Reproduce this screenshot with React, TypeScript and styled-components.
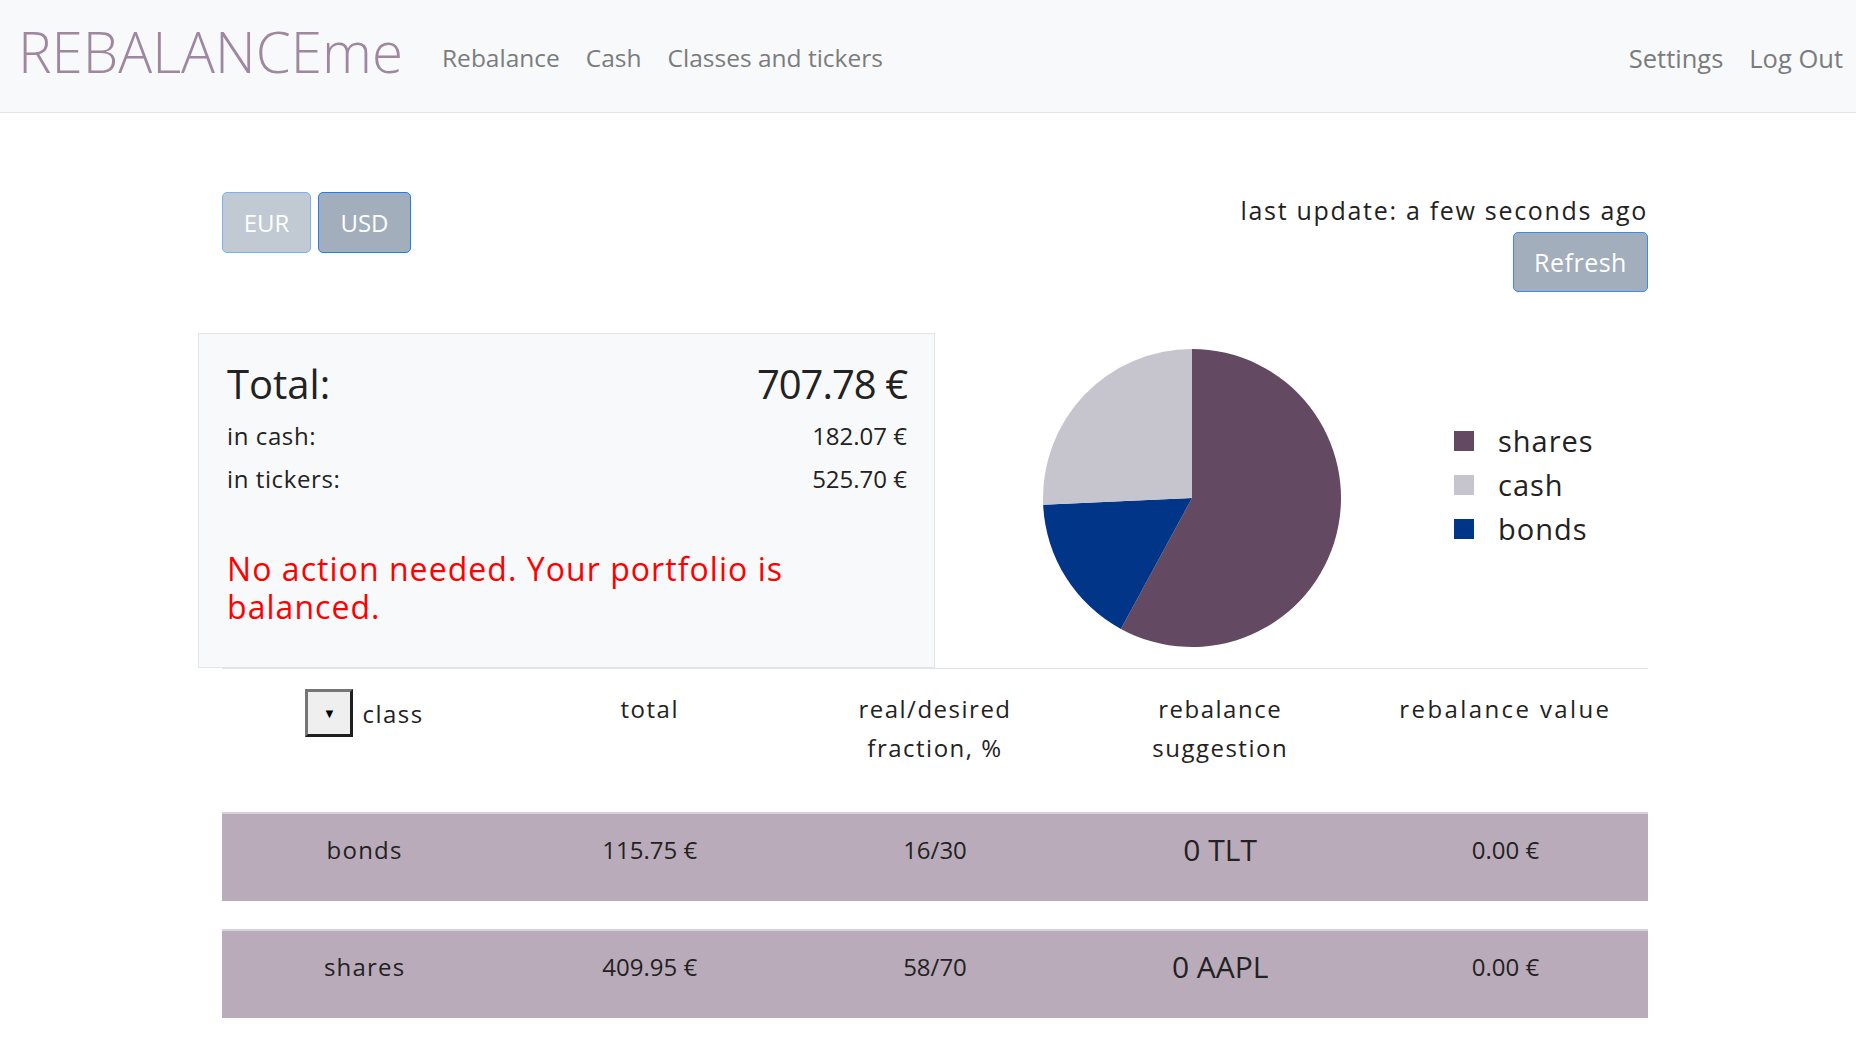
import styled, { createGlobalStyle } from "styled-components";

/**
 * 글로벌 스타일
 */
const GlobalStyle = createGlobalStyle`
  body {
    margin: 0;
    background: #ffffff;
    font-family: "Open Sans", "Lato", sans-serif;
    color: #212529;
  }
  * {
    box-sizing: border-box;
  }
`;

interface ClassRow {
  name: string;
  total: string;
  fraction: string;
  suggestion: string;
  value: string;
}

const rows: ClassRow[] = [
  { name: "bonds", total: "115.75 €", fraction: "16/30", suggestion: "0 TLT", value: "0.00 €" },
  { name: "shares", total: "409.95 €", fraction: "58/70", suggestion: "0 AAPL", value: "0.00 €" },
];

const slices = [
  { name: "shares", amount: 409.95, color: "#634a62" },
  { name: "bonds", amount: 115.75, color: "#003587" },
  { name: "cash", amount: 182.07, color: "#c6c5cd" },
];

const legend = ["shares", "cash", "bonds"];

/**
 * 파이 차트
 */
const PieChart = () => {
  const total = slices.reduce((s, x) => s + x.amount, 0);
  const cx = 150;
  const cy = 150;
  const r = 149;
  let start = 0;

  const point = (a: number) => {
    const rad = (a * Math.PI) / 180;
    return `${cx + r * Math.sin(rad)} ${cy - r * Math.cos(rad)}`;
  };

  return (
    <svg width="300" height="300" viewBox="0 0 300 300">
      {slices.map((s) => {
        const sweep = (s.amount / total) * 360;
        const end = start + sweep;
        const large = sweep > 180 ? 1 : 0;
        const d = `M ${cx} ${cy} L ${point(start)} A ${r} ${r} 0 ${large} 1 ${point(end)} Z`;
        start = end;
        return <path key={s.name} d={d} fill={s.color} />;
      })}
    </svg>
  );
};

const App = () => {
  return (
    <>
      <GlobalStyle />
      <StyledNav>
        <div className="brand">REBALANCEme</div>
        <div className="links">
          <a>Rebalance</a>
          <a>Cash</a>
          <a>Classes and tickers</a>
        </div>
        <div className="links right">
          <a>Settings</a>
          <a>Log Out</a>
        </div>
      </StyledNav>

      <StyledMain>
        {/* 통화 선택 / 업데이트 */}
        <TopBar>
          <div className="currencies">
            <CurrencyButton $active={false} $width={89}>
              EUR
            </CurrencyButton>
            <CurrencyButton $active={true} $width={93}>
              USD
            </CurrencyButton>
          </div>
          <div className="update">
            <span>last update: a few seconds ago</span>
            <RefreshButton>Refresh</RefreshButton>
          </div>
        </TopBar>

        {/* 요약 + 차트 */}
        <SummaryRow>
          <SummaryCard>
            <div className="line big">
              <span>Total:</span>
              <span className="num">707.78 €</span>
            </div>
            <div className="line">
              <span>in cash:</span>
              <span className="num">182.07 €</span>
            </div>
            <div className="line">
              <span>in tickers:</span>
              <span className="num">525.70 €</span>
            </div>
            <div className="status">No action needed. Your portfolio is balanced.</div>
          </SummaryCard>
          <ChartArea>
            <PieChart />
            <Legend>
              {legend.map((name) => (
                <li key={name}>
                  <Swatch $color={slices.find((s) => s.name === name)!.color} />
                  {name}
                </li>
              ))}
            </Legend>
          </ChartArea>
        </SummaryRow>

        {/* 클래스 테이블 */}
        <Table>
          <HeaderRow>
            <div className="cell">
              <SortButton>▼</SortButton>
              <span>class</span>
            </div>
            <div className="cell">total</div>
            <div className="cell">
              real/desired
              <br />
              fraction, %
            </div>
            <div className="cell">
              rebalance
              <br />
              suggestion
            </div>
            <div className="cell">rebalance value</div>
          </HeaderRow>
          {rows.map((row) => (
            <DataRow key={row.name}>
              <div className="word">{row.name}</div>
              <div>{row.total}</div>
              <div>{row.fraction}</div>
              <div className="suggestion">{row.suggestion}</div>
              <div>{row.value}</div>
            </DataRow>
          ))}
        </Table>
      </StyledMain>
    </>
  );
};

export default App;

const StyledNav = styled.nav`
  display: flex;
  align-items: center;
  height: 113px;
  padding: 0 0 0 18px;
  background: #f8f9fa;
  border-bottom: 1px solid #e3e5e8;
  font-family: "Open Sans", sans-serif;
  & > .brand {
    font-size: 56.5px;
    font-weight: 300;
    color: #9f87a0;
    margin-right: 26px;
    line-height: 1;
    padding-bottom: 8px;
  }
  & > .links {
    display: flex;
    padding-top: 3px;
    & > a {
      font-size: 24.5px;
      color: #7b7c7d;
      padding: 0 13px;
      cursor: pointer;
    }
  }
  & > .right {
    margin-left: auto;
    & > a {
      font-size: 25.5px;
    }
  }
`;

const StyledMain = styled.main`
  width: 1426px;
  margin-left: 222px;
  padding-top: 79px;
`;

const TopBar = styled.div`
  display: flex;
  justify-content: space-between;
  align-items: flex-start;
  height: 141px;
  & > .currencies {
    display: flex;
    gap: 7px;
  }
  & > .update {
    display: flex;
    flex-direction: column;
    align-items: flex-end;
    margin-top: 1px;
    gap: 5px;
    font-size: 25px;
    letter-spacing: 1.7px;
    color: #222;
  }
`;

const CurrencyButton = styled.button<{ $active: boolean; $width: number }>`
  width: ${(p) => p.$width}px;
  height: 61px;
  padding: 0;
  font-family: "Open Sans", sans-serif;
  font-size: 24px;
  color: #ffffff;
  background: ${(p) => (p.$active ? "#a2aebb" : "#c1c9d3")};
  border: 1px solid ${(p) => (p.$active ? "#1a7ff0" : "#7ab1f2")};
  border-radius: 5px;
  cursor: pointer;
`;

const RefreshButton = styled.button`
  width: 135px;
  height: 60px;
  padding: 0;
  font-family: "Open Sans", sans-serif;
  font-size: 25px;
  letter-spacing: 0.5px;
  color: #ffffff;
  background: #a2aebb;
  border: 1px solid #3b8be8;
  border-radius: 5px;
  cursor: pointer;
`;

const SummaryRow = styled.div`
  display: flex;
  height: 335px;
`;

const SummaryCard = styled.div`
  width: 737px;
  margin-left: -24px;
  padding: 22px 27px 0 28px;
  background: #f8f9fa;
  border: 1px solid #e2e4e7;
  & > .line {
    display: flex;
    justify-content: space-between;
    font-size: 24px;
    line-height: 43px;
    letter-spacing: 0.6px;
    color: #222;
  }
  & > .line > .num {
    letter-spacing: 0;
  }
  & > .big {
    font-size: 40px;
    line-height: 56px;
    margin-bottom: 2px;
    letter-spacing: 0;
  }
  & > .big > .num {
    letter-spacing: -1px;
  }
  & > .status {
    width: 620px;
    margin-top: 50px;
    font-size: 32px;
    line-height: 38px;
    letter-spacing: 1.05px;
    color: #ff0000;
  }
`;

const ChartArea = styled.div`
  display: flex;
  align-items: center;
  padding-left: 107px;
  padding-bottom: 6px;
  & > svg {
    flex-shrink: 0;
  }
`;

const Legend = styled.ul`
  list-style: none;
  margin: 0 0 26px 112px;
  padding: 0;
  font-family: "Open Sans", sans-serif;
  font-size: 29px;
  letter-spacing: 1px;
  color: #222;
  & > li {
    display: flex;
    align-items: center;
    height: 44px;
  }
`;

const Swatch = styled.span<{ $color: string }>`
  width: 20px;
  height: 20px;
  margin-right: 24px;
  background: ${(p) => p.$color};
`;

const Table = styled.div`
  border-top: 1px solid #e2e4e7;
  font-size: 24px;
  color: #222;
`;

const HeaderRow = styled.div`
  display: grid;
  grid-template-columns: repeat(5, 1fr);
  height: 143px;
  padding-top: 20px;
  line-height: 39px;
  letter-spacing: 1.5px;
  & > .cell {
    display: flex;
    justify-content: center;
    align-items: flex-start;
    text-align: center;
  }
  & > .cell:last-child {
    letter-spacing: 2.4px;
  }
  & > .cell:first-child {
    align-items: center;
    height: 48px;
    gap: 9px;
  }
`;

const SortButton = styled.button`
  width: 48px;
  height: 48px;
  padding: 0;
  font-size: 13px;
  color: #000;
  background: #efefef;
  border: 3px solid;
  border-color: #767676 #1f1f1f #1f1f1f #767676;
  cursor: pointer;
`;

const DataRow = styled.div`
  display: grid;
  grid-template-columns: repeat(5, 1fr);
  align-items: center;
  height: 89px;
  margin-bottom: 28px;
  padding-bottom: 16px;
  background: #baabba;
  border-top: 2px solid #d6d0d8;
  text-align: center;
  & > .word {
    letter-spacing: 1.2px;
  }
  & > .suggestion {
    font-size: 30px;
  }
`;
